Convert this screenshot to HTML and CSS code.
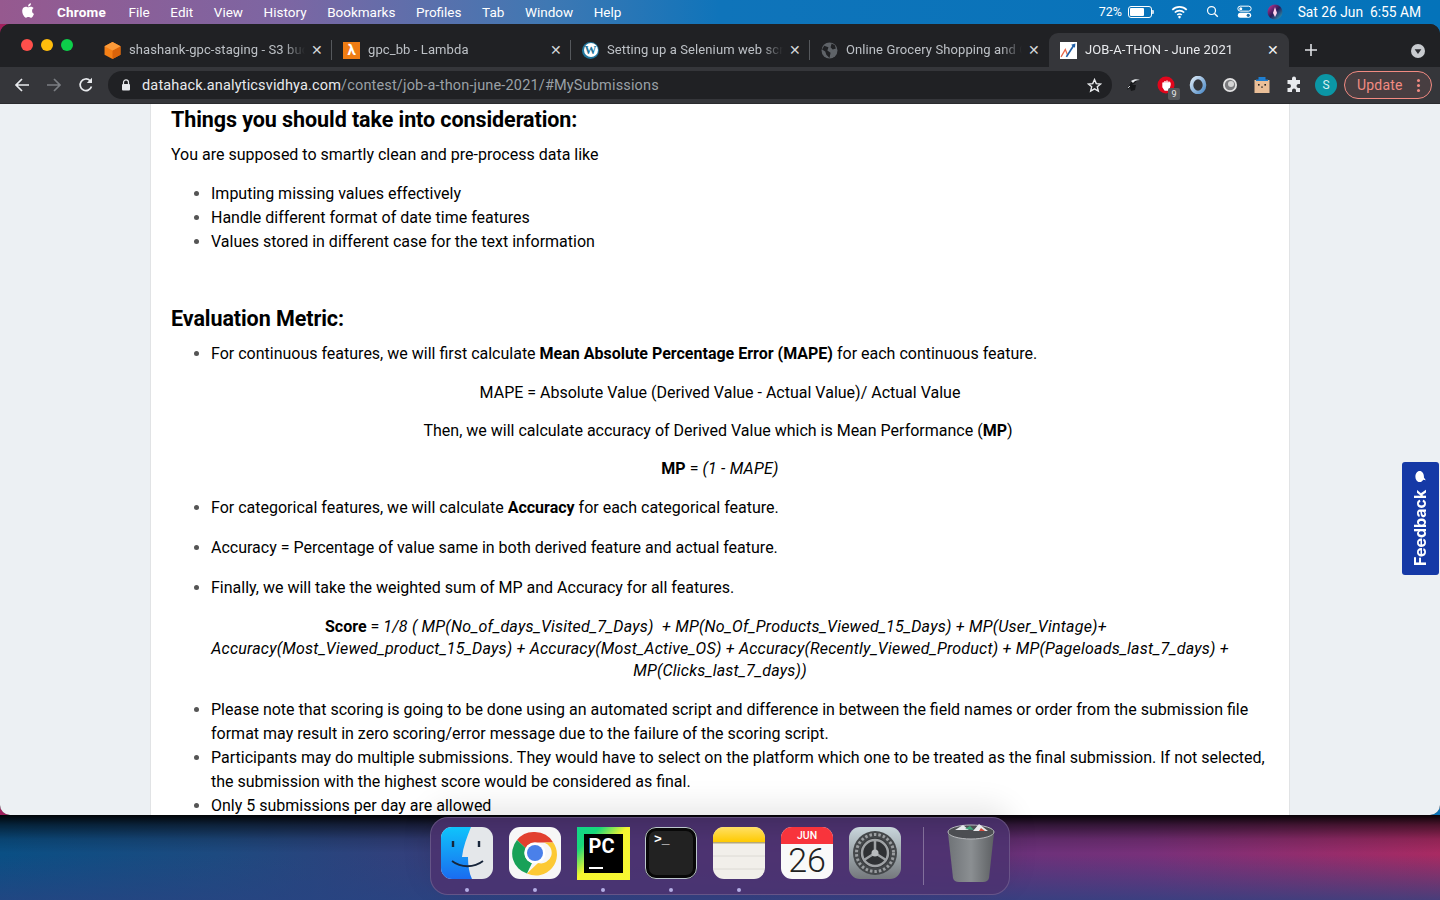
FILE: index.html
```
<!DOCTYPE html>
<html lang="en">
<head>
<meta charset="utf-8">
<title>JOB-A-THON - June 2021</title>
<link rel="stylesheet" href="styles.css">
</head>
<body>
<div class="desktop">
  <header class="menubar">
    <svg class="apple" viewBox="0 0 24 24"><path d="M17.05 12.54c-.03-2.6 2.12-3.85 2.22-3.91-1.21-1.77-3.09-2.01-3.76-2.04-1.6-.16-3.12.94-3.93.94-.81 0-2.06-.92-3.39-.89-1.74.03-3.35 1.01-4.25 2.57-1.81 3.14-.46 7.8 1.3 10.35.86 1.25 1.89 2.65 3.24 2.6 1.3-.05 1.79-.84 3.36-.84 1.57 0 2.01.84 3.39.81 1.4-.02 2.28-1.27 3.14-2.53.99-1.45 1.4-2.85 1.42-2.93-.03-.01-2.72-1.04-2.75-4.13zM14.47 4.9c.72-.87 1.2-2.08 1.07-3.28-1.03.04-2.28.69-3.02 1.55-.66.77-1.24 2-1.09 3.18 1.15.09 2.33-.58 3.04-1.45z"/></svg>
    <nav class="menus">
      <span class="menu-app">Chrome</span><span>File</span><span>Edit</span><span>View</span><span>History</span><span>Bookmarks</span><span>Profiles</span><span>Tab</span><span>Window</span><span>Help</span>
    </nav>
    <div class="status">
      <span class="pct">72%</span>
      <span class="battery"><span class="battery-fill"></span></span>
      <svg class="st-wifi" viewBox="0 0 20 16"><path d="M1.5 5.5a12 12 0 0 1 17 0M4.5 8.6a7.8 7.8 0 0 1 11 0M7.4 11.5a3.6 3.6 0 0 1 5.2 0" fill="none" stroke="#fff" stroke-width="1.9"/><circle cx="10" cy="14" r="1.5" fill="#fff"/></svg>
      <svg class="st-search" viewBox="0 0 16 16"><circle cx="6.8" cy="6.8" r="4.9" fill="none" stroke="#fff" stroke-width="1.5"/><path d="M10.4 10.4 14.5 14.5" stroke="#fff" stroke-width="1.7"/></svg>
      <svg class="st-control" viewBox="0 0 18 16"><rect x="1" y="1" width="16" height="6" rx="3" fill="none" stroke="#fff" stroke-width="1.2"/><circle cx="4.5" cy="4" r="1.8" fill="#fff"/><rect x="1" y="9" width="16" height="6" rx="3" fill="#fff"/><circle cx="13.5" cy="12" r="1.9" fill="#1a6ea8"/></svg>
      <svg class="st-siri" viewBox="0 0 16 16"><defs><linearGradient id="sg" x1="0" y1="0" x2="1" y2="1"><stop offset="0" stop-color="#d8369c"/><stop offset=".5" stop-color="#2a1c58"/><stop offset="1" stop-color="#28b0c8"/></linearGradient></defs><circle cx="8" cy="8" r="7.5" fill="url(#sg)"/><path d="M8 3 10 9 8 13 6 9z" fill="#ffd4ee"/></svg>
      <span class="clock">Sat 26 Jun&nbsp; 6:55 AM</span>
    </div>
  </header>

  <main class="window">
    <div class="tabstrip">
      <div class="traffic"><i class="dot-red"></i><i class="dot-yellow"></i><i class="dot-green"></i></div>
      <div class="tab sep">
        <svg class="fav" viewBox="0 0 16 16"><path d="M8 0 15.5 4V12L8 16 .5 12V4z" fill="#f58016"/><path d="M8 8 15.5 4V12L8 16z" fill="#d9630a"/><path d="M8 0 15.5 4 8 8 .5 4z" fill="#fb9a3a"/></svg>
        <span class="tab-title">shashank-gpc-staging - S3 bucket</span><span class="tab-x">✕</span>
      </div>
      <div class="tab sep">
        <span class="fav fav-lambda">λ</span>
        <span class="tab-title">gpc_bb - Lambda</span><span class="tab-x">✕</span>
      </div>
      <div class="tab sep">
        <span class="fav fav-wp"><span class="fav-wp-inner">W</span></span>
        <span class="tab-title">Setting up a Selenium web scraper</span><span class="tab-x">✕</span>
      </div>
      <div class="tab">
        <svg class="fav" viewBox="0 0 16 16"><circle cx="8" cy="8" r="7.5" fill="#5f6368"/><path d="M3 3.5 7 5 6 8l3 2-1 5-3-3-1-3-3-2zM10 1.5l3 1.5 1 3-3 1-2-2z" fill="#202124"/></svg>
        <span class="tab-title">Online Grocery Shopping and Online</span><span class="tab-x">✕</span>
      </div>
      <div class="tab tab-active">
        <svg class="fav" viewBox="0 0 16 16"><rect width="16" height="16" fill="#fff"/><path d="M1 14 5 7l2 5" fill="none" stroke="#e8684a" stroke-width="1.2"/><path d="M6 14 13 3" fill="none" stroke="#1f5fa8" stroke-width="1.6"/><path d="M10.5 2.5 14.5 1.5 14 5.5z" fill="#1f5fa8"/></svg>
        <span class="tab-title tab-title-active">JOB-A-THON - June 2021</span><span class="tab-x tab-x-active">✕</span>
      </div>
      <svg class="newtab" viewBox="0 0 14 14"><path d="M7 1v12M1 7h12" stroke="#dfe1e5" stroke-width="1.6"/></svg>
      <span class="tabmenu"><svg viewBox="0 0 14 14"><circle cx="7" cy="7" r="7" fill="#c8cbcf"/><path d="M3.6 5.2h6.8L7 10z" fill="#2b2c30"/></svg></span>
    </div>

    <div class="toolbar">
      <svg class="nav-ic" viewBox="0 0 16 16"><path d="M15 8H2M8 2 2 8l6 6" fill="none" stroke="#e8eaed" stroke-width="1.7"/></svg>
      <svg class="nav-ic" viewBox="0 0 16 16"><path d="M1 8h13M8 2l6 6-6 6" fill="none" stroke="#7b7e83" stroke-width="1.7"/></svg>
      <svg class="nav-ic" viewBox="0 0 16 16"><path d="M13.5 9.5A5.8 5.8 0 1 1 12 3.6" fill="none" stroke="#e8eaed" stroke-width="1.7"/><path d="M14 .8V6H8.8z" fill="#e8eaed"/></svg>
      <div class="omnibox">
        <svg class="lock" viewBox="0 0 10 12"><path d="M2.5 5V3.4a2.5 2.5 0 0 1 5 0V5" fill="none" stroke="#e8eaed" stroke-width="1.2"/><rect x="1" y="5" width="8" height="6.5" rx="1" fill="#e8eaed"/></svg>
        <span class="url"><span class="url-host">datahack.analyticsvidhya.com</span>/contest/job-a-thon-june-2021/#MySubmissions</span>
        <svg class="star" viewBox="0 0 16 16"><path d="M8 1.7 9.900 6l4.600.4-3.500 3 1.100 4.600L8 11.600 3.900 14 5 9.400l-3.500-3L6.100 6z" fill="none" stroke="#e8eaed" stroke-width="1.500"/></svg>
      </div>
      <div class="ext-row">
        <svg class="ext" viewBox="0 0 18 18"><path d="M2 14 6 6c2-3 6-3 10-2-3 0-5 1-6 3l-3 2 4 0-1 5-4 1-1-3z" fill="#17181a"/><path d="M6 5c3-2 6-2 9-1-3 0-6 1-7 3z" fill="#e8eaed"/><path d="M3 12l2-2" stroke="#c8cbcf"/></svg>
        <span class="ext ext-stop"><svg viewBox="0 0 18 18"><circle cx="9" cy="9" r="8.500" fill="#e1061c"/><path d="M6 6.500v4.500l2 3h3.500l1.500-5V6.500M8 5v4M10 4.500V9M12 5.500V9" fill="#fff" stroke="#fff" stroke-width="1.400"/></svg><b class="ext-badge">9</b></span>
        <svg class="ext" viewBox="0 0 18 18"><defs><linearGradient id="rg" x1="0" y1="0" x2="1" y2="1"><stop offset="0" stop-color="#dbe8f4"/><stop offset="1" stop-color="#4f8cc8"/></linearGradient></defs><ellipse cx="9" cy="9" rx="6.500" ry="7.500" fill="none" stroke="url(#rg)" stroke-width="3.600"/></svg>
        <svg class="ext" viewBox="0 0 18 18"><circle cx="9" cy="9" r="7" fill="#e3e3e3"/><circle cx="9" cy="9" r="5.200" fill="#7a7b7e"/><circle cx="10" cy="8" r="3" fill="#d4d4d4"/></svg>
        <svg class="ext" viewBox="0 0 18 18"><rect x="1.500" y="4" width="15" height="13" fill="#eabf98"/><rect x="5.500" y="1" width="7" height="3" fill="#1f7fd0"/><rect x="3" y="3.500" width="12" height="1.500" fill="#1f7fd0"/><rect x="5" y="8" width="1.600" height="1.600" fill="#222"/><rect x="11.400" y="8" width="1.600" height="1.600" fill="#222"/><rect x="8.200" y="10.500" width="1.600" height="1.200" fill="#222"/></svg>
        <svg class="ext" viewBox="0 0 18 18"><path d="M7 2.500a2 2 0 0 1 4 0V4h4v4h-1.500a2 2 0 0 0 0 4H15v4h-4v-1.500a2 2 0 0 0-4 0V16H2.500v-4H4a2 2 0 0 0 0-4H2.500V4H7z" fill="#e8eaed"/></svg>
        <span class="avatar">S</span>
      </div>
      <div class="update"><span class="update-text">Update</span><span class="update-dots"><i></i><i></i><i></i></span></div>
    </div>

    <div class="page">
      <article class="card">
        <h3>Things you should take into consideration:</h3>
        <p>You are supposed to smartly clean and pre-process data like</p>
        <ul>
          <li>Imputing missing values effectively</li>
          <li>Handle different format of date time features</li>
          <li>Values stored in different case for the text information</li>
        </ul>
        <p class="spacer">&nbsp;</p>
        <h3>Evaluation Metric:</h3>
        <ul>
          <li>For continuous features, we will first calculate <strong>Mean Absolute Percentage Error (MAPE)</strong> for each continuous feature.</li>
        </ul>
        <p class="center">MAPE = Absolute Value (Derived Value - Actual Value)/ Actual Value</p>
        <p class="center">Then, we will calculate accuracy of Derived Value which is Mean Performance (<strong>MP</strong>)&nbsp;</p>
        <p class="center"><strong>MP</strong> = <em>(1 - MAPE)</em></p>
        <ul><li>For categorical features, we will calculate <strong>Accuracy</strong> for each categorical feature.</li></ul>
        <ul><li>Accuracy = Percentage of value same in both derived feature and actual feature.</li></ul>
        <ul><li>Finally, we will take the weighted sum of MP and Accuracy for all features.</li></ul>
        <p class="center"><strong>Score</strong> = <em>1/8 ( MP(No_of_days_Visited_7_Days)&nbsp; + MP(No_Of_Products_Viewed_15_Days) + MP(User_Vintage)+&nbsp;&nbsp;<br>Accuracy(Most_Viewed_product_15_Days) + Accuracy(Most_Active_OS) + Accuracy(Recently_Viewed_Product) + MP(Pageloads_last_7_days) + MP(Clicks_last_7_days))</em></p>
        <ul>
          <li>Please note that scoring is going to be done using an automated script and difference in between the field names or order from the submission file format may result in zero scoring/error message due to the failure of the scoring script.</li>
          <li>Participants may do multiple submissions. They would have to select on the platform which one to be treated as the final submission. If not selected, the submission with the highest score would be considered as final.</li>
          <li>Only 5 submissions per day are allowed</li>
        </ul>
      </article>
      <aside class="feedback"><span class="feedback-text">Feedback</span><svg class="feedback-ic" viewBox="0 0 14 14"><path d="M7 1.500c3.300 0 6 1.900 6 4.600s-2.700 4.600-6 4.600l-1 0-3 2 .6-2.800C2 9 1 7.700 1 6.100 1 3.400 3.700 1.500 7 1.500z" fill="#fff"/></svg></aside>
    </div>
  </main>

  <footer class="dock-area">
    <div class="dock">
      <div class="dock-item">
        <svg class="dock-ic" viewBox="0 0 52 52"><defs><linearGradient id="fa" x1="0" y1="0" x2="0" y2="1"><stop offset="0" stop-color="#0fc4fb"/><stop offset="1" stop-color="#1a6cf0"/></linearGradient></defs><rect width="52" height="52" rx="11" fill="#e4e7ea"/><path d="M11 0H30C26 10 22 20 21 30H27C27 38 28 46 31 52H11A11 11 0 0 1 0 41V11A11 11 0 0 1 11 0Z" fill="url(#fa)"/><path d="M12 14v6M38 14v6" stroke="#17253a" stroke-width="2.400"/><path d="M11 34c9 7 22 7 31 0" fill="none" stroke="#17253a" stroke-width="1.800"/></svg>
        <i class="dock-dot"></i>
      </div>
      <div class="dock-item">
        <svg class="dock-ic" viewBox="0 0 52 52"><rect width="52" height="52" rx="11" fill="#f7f7f7"/><path d="M26 5A21 21 0 0 1 44.200 15.500H26A10.500 10.500 0 0 0 16.600 21L8 13A21 21 0 0 1 26 5Z" fill="#e2402f"/><path d="M8 13 16.600 21 A10.500 10.500 0 0 0 23 36L18 46.500 A21 21 0 0 1 8 13Z" fill="#18a158"/><path d="M44.200 15.500A21 21 0 0 1 18 46.500L29 36A10.500 10.500 0 0 0 35 15.500Z" fill="#fcc934"/><circle cx="26" cy="26" r="10.500" fill="#fff"/><circle cx="26" cy="26" r="8" fill="#4a80ea"/></svg>
        <i class="dock-dot"></i>
      </div>
      <div class="dock-item">
        <div class="dock-pc"><div class="dock-pc-inner"><span class="dock-pc-text">PC</span><i class="dock-pc-bar"></i></div></div>
        <i class="dock-dot"></i>
      </div>
      <div class="dock-item">
        <div class="dock-term"><span class="dock-term-text">&gt;_</span></div>
        <i class="dock-dot"></i>
      </div>
      <div class="dock-item">
        <svg class="dock-ic" viewBox="0 0 52 52"><defs><linearGradient id="ny" x1="0" y1="0" x2="0" y2="1"><stop offset="0" stop-color="#ffe066"/><stop offset="1" stop-color="#ffca00"/></linearGradient><clipPath id="nc"><rect width="52" height="52" rx="11"/></clipPath></defs><g clip-path="url(#nc)"><rect width="52" height="52" fill="#f1efea"/><rect width="52" height="15" fill="url(#ny)"/><rect y="15" width="52" height="1.500" fill="#b5a878"/><path d="M0 29h52M0 42h52" stroke="#dcdad4"/></g></svg>
        <i class="dock-dot"></i>
      </div>
      <div class="dock-item">
        <div class="dock-cal"><span class="dock-cal-month">JUN</span><span class="dock-cal-day">26</span></div>
      </div>
      <div class="dock-item">
        <svg class="dock-ic" viewBox="0 0 52 52"><defs><linearGradient id="gr" x1="0" y1="0" x2="0" y2="1"><stop offset="0" stop-color="#c9d6dc"/><stop offset="1" stop-color="#74787c"/></linearGradient></defs><rect width="52" height="52" rx="11" fill="url(#gr)"/><circle cx="26" cy="26" r="22" fill="#44474a"/><circle cx="26" cy="26" r="18.500" fill="none" stroke="#9a9da0" stroke-width="3" stroke-dasharray="2.500 2"/><circle cx="26" cy="26" r="15" fill="#2f3134"/><circle cx="26" cy="26" r="13" fill="none" stroke="#9fa2a5" stroke-width="2.500"/><path d="M26 26V13M26 26 15 33M26 26 37 33" stroke="#9fa2a5" stroke-width="2.500"/><circle cx="26" cy="26" r="3.500" fill="#b9bcbe"/></svg>
      </div>
      <i class="dock-divider"></i>
      <div class="dock-item">
        <svg class="dock-ic dock-trash" viewBox="0 0 52 60"><defs><linearGradient id="tr" x1="0" y1="0" x2="1" y2="0"><stop offset="0" stop-color="#6f7377"/><stop offset=".5" stop-color="#8b8f92"/><stop offset="1" stop-color="#5d6063"/></linearGradient></defs><path d="M3 10H49L44 55Q43 59 38 59H14Q9 59 8 55Z" fill="url(#tr)"/><ellipse cx="26" cy="9" rx="23" ry="7" fill="#4c4e52" stroke="#b8babd"/><path d="M10 7l8-5 6 5zM28 8l6-7 9 7z" fill="#e8eaed"/><path d="M20 6l5-3 4 4z" fill="#3ea57a"/><path d="M36 5l4 3h-6z" fill="#d24a3a"/></svg>
      </div>
    </div>
  </footer>
</div>
</body>
</html>
```
FILE: styles.css
```
* { box-sizing: border-box; }
html, body { margin: 0; padding: 0; height: 100%; }
body {
  font-family: Roboto, "Liberation Sans", sans-serif;
  background: linear-gradient(90deg, #a0205c, #0a72b8);
  overflow: hidden;
}
.desktop { width: 1440px; height: 900px; display: flex; flex-direction: column; overflow: hidden; }

/* menu bar */
.menubar {
  height: 24px; flex: none; display: flex; align-items: center; color: #fff; font-size: 13.500px; padding-left: 20px;
  background: linear-gradient(90deg, #96598f 0, #7c66a3 20%, #3f78b3 38%, #0f74ba 50%, #0473ba 100%);
}
.apple { width: 17px; height: 17px; fill: #fff; flex: none; margin-top: -3px; }
.menus { display: flex; gap: 20.600px; margin-left: 20px; margin-top: -1px; }
.menu-app { font-weight: 700; margin-right: 2px; letter-spacing: .2px; }
.status { margin-left: auto; display: flex; align-items: center; padding-right: 19px; margin-top: -1px; }
.pct { font-size: 12.500px; width: 29px; }
.battery { width: 24px; height: 12px; border: 1px solid #fff; border-radius: 3px; padding: 1px; display: block; margin-right: 19px; position: relative; }
.battery::after { content: ""; position: absolute; right: -3px; top: 3px; width: 2px; height: 4px; background: #c8dcec; border-radius: 0 1px 1px 0; }
.battery-fill { display: block; width: 72%; height: 100%; background: #fff; border-radius: 1px; }
.st-wifi { width: 17px; height: 14px; margin-right: 18px; }
.st-search { width: 13px; height: 13px; margin-right: 18px; }
.st-control { width: 15px; height: 14px; margin-right: 15px; }
.st-siri { width: 16px; height: 16px; margin-right: 15px; }
.clock { font-size: 13.800px; }

/* window */
.window {
  height: 791px; flex: none; display: flex; flex-direction: column; background: #202124;
  border-radius: 10px; overflow: hidden; position: relative; z-index: 1;
}
.tabstrip { height: 43px; flex: none; display: flex; align-items: flex-end; background: #202124; position: relative; }
.traffic { width: 93px; height: 100%; flex: none; display: flex; gap: 8px; padding: 15px 0 0 21px; }
.traffic i { display: block; width: 12px; height: 12px; border-radius: 50%; }
.dot-red { background: #ff4f4b; }
.dot-yellow { background: #ffbd0c; }
.dot-green { background: #0dd04a; }
.tab { width: 239px; height: 34px; flex: none; display: flex; align-items: center; padding-left: 11px; position: relative; color: #bdc1c6; font-size: 13px; }
.sep::after { content: ""; position: absolute; right: 0; top: 7px; height: 20px; width: 1px; background: #55585c; }
.fav { width: 17px; height: 17px; flex: none; display: block; }
.fav-lambda { background: #ef7d14; color: #fff; font-weight: 700; font-size: 15px; line-height: 17px; text-align: center; }
.fav-wp { background: #21759b; border-radius: 50%; display: flex; align-items: center; justify-content: center; }
.fav-wp-inner { width: 14px; height: 14px; border-radius: 50%; background: #fff; color: #21759b; font: 700 12px/14px "Liberation Serif", serif; text-align: center; }
.tab-title {
  width: 176px; flex: none; margin: 0 0 2px 8px; white-space: nowrap; overflow: hidden; letter-spacing: .1px;
  -webkit-mask-image: linear-gradient(90deg, #000 88%, transparent 100%); mask-image: linear-gradient(90deg, #000 88%, transparent 100%);
}
.tab-x { margin-left: 5px; width: 14px; flex: none; text-align: center; font-size: 13.500px; color: #d4d6d9; }
.tab-active { background: #35363a; border-radius: 9px 9px 0 0; color: #e8eaed; width: 240px; }
.tab-x-active { color: #f1f3f4; }
.newtab { width: 14px; height: 14px; margin: 0 0 10px 15px; flex: none; }
.tabmenu { width: 14px; height: 14px; margin: 0 15px 10px auto; display: block; }
.toolbar { height: 36px; flex: none; display: flex; align-items: center; background: #35363a; padding-left: 14px; position: relative; }
.nav-ic { width: 16px; height: 16px; margin-right: 16px; flex: none; }
.nav-ic:nth-of-type(3) { margin-right: 14px; }
.omnibox { width: 1004px; height: 28px; flex: none; border-radius: 14px; background: #202124; display: flex; align-items: center; padding-left: 13px; }
.lock { width: 10px; height: 12px; flex: none; }
.url { margin-left: 11px; color: #9aa0a6; font-size: 14.500px; letter-spacing: .16px; white-space: nowrap; }
.url-host { color: #e8eaed; }
.star { width: 15px; height: 15px; margin-left: auto; margin-right: 10px; }
.ext-row { display: flex; align-items: center; gap: 14px; margin-left: 13px; flex: none; }
.ext { width: 18px; height: 18px; flex: none; display: block; position: relative; }
.ext-stop svg { display: block; }
.ext-badge { position: absolute; right: -5px; bottom: -6px; width: 12px; height: 12px; background: #55575a; color: #e8eaed; font-size: 9px; font-weight: 400; line-height: 12px; text-align: center; border-radius: 2px; }
.avatar { width: 22px; height: 22px; border-radius: 50%; background: #0b96a5; color: #d8f0f2; font-size: 12px; line-height: 22px; text-align: center; margin-left: -2px; }
.update { width: 88px; height: 28px; margin-left: 7px; flex: none; border: 1px solid #f28b82; border-radius: 14px; background: rgba(242, 139, 130, .1); display: flex; align-items: center; padding-left: 12px; color: #f28b82; font-size: 14px; letter-spacing: .2px; }
.update-dots { display: flex; flex-direction: column; gap: 2px; margin-left: auto; margin-right: 11px; }
.update-dots i { display: block; width: 3px; height: 3px; border-radius: 50%; background: #f28b82; }

/* page */
.page { flex: 1; min-height: 0; background: #ecf0f3; overflow: hidden; position: relative; border-top: 1px solid #2a2b2e; }
.card {
  width: 1140px; margin-left: 150px; height: 100%; background: #fff; overflow: hidden; padding: 4px 20px 0 20px;
  border-left: 1px solid #e1e3e5; border-right: 1px solid #e1e3e5; color: #000; font-size: 16px; line-height: 22px;
}
.card h3 { font-size: 21.500px; line-height: 24px; font-weight: 700; margin: 0 0 11px; letter-spacing: -.08px; }
.card p { margin: 16px 0; }
.card h3 + p { margin-top: 12px; }
.card ul { margin: 16px 0; padding-left: 40px; }
.card h3 + ul { margin-top: 0; }
.card .spacer { margin-bottom: 15px; }
.card li { line-height: 24px; }
.card li::marker { color: #555; }
.card em { letter-spacing: .22px; }
.center { text-align: center; }
.feedback {
  position: absolute; right: 1px; top: 358px; width: 37px; height: 113px; background: #1539a6; border-radius: 3px;
  display: flex; justify-content: center; align-items: center; padding-top: 1px; gap: 7px; color: #fff; writing-mode: vertical-rl;
  transform: rotate(180deg);
}
.feedback-text { font: 700 16px/37px Inter, Roboto, sans-serif; }
.feedback-ic { width: 13px; height: 13px; transform: rotate(90deg); }

/* dock */
.dock-area {
  flex: 1; min-height: 0; display: flex; justify-content: center; padding-top: 2px; position: relative; z-index: 2;
  background:
    linear-gradient(180deg, rgba(0,0,0,.95) 0, rgba(0,0,0,.55) 10px, rgba(0,0,0,.15) 24px, transparent 38px),
    linear-gradient(0deg, rgba(40,68,130,.75) 0, transparent 45px),
    linear-gradient(90deg, #0a4f84 0, #1d4a80 15%, #3a3c7a 33%, #5c337a 60%, #78307a 80%, #a82a62 100%);
}
.dock {
  width: 580px; height: 78px; flex: none; display: flex; gap: 16px; padding: 9px 0 0 10px;
  background: rgba(76, 50, 112, .85); border: 1px solid rgba(255,255,255,.16); border-radius: 18px;
  box-shadow: 0 -10px 30px rgba(0,0,0,.1);
}
.dock-item { width: 52px; flex: none; display: flex; flex-direction: column; align-items: center; }
.dock-ic { width: 52px; height: 52px; display: block; flex: none; }
.dock-trash { height: 60px; margin-top: -4px; }
.dock-dot { width: 4px; height: 4px; border-radius: 50%; background: #b4aee6; margin-top: 9px; display: block; }
.dock-pc {
  width: 53px; height: 53px; padding: 7px; flex: none;
  background: linear-gradient(135deg, #12d68a 0, #18d87a 22%, #f5f530 48%, #f7f732 100%);
}
.dock-pc-inner { height: 100%; background: #000; padding: 0 0 0 5px; color: #fff; position: relative; }
.dock-pc-text { font: 700 20px/24px Roboto, sans-serif; display: block; }
.dock-pc-bar { position: absolute; left: 5px; bottom: 4px; width: 14px; height: 2px; background: #fff; display: block; }
.dock-item:nth-child(3) .dock-dot { margin-top: 8px; }
.dock-term { width: 52px; height: 52px; flex: none; background: #222; border: 4px solid #080808; outline: 1px solid #bcc6cc; outline-offset: -1px; border-radius: 11px; color: #fff; padding: 1px 0 0 5px; }
.dock-term-text { font: 700 13px/16px "Liberation Mono", monospace; display: block; }
.dock-cal { width: 52px; height: 52px; flex: none; background: #f9f9f9; border-radius: 11px; overflow: hidden; display: flex; flex-direction: column; align-items: center; }
.dock-cal-month { width: 100%; height: 17px; background: #f8343c; color: #fff; font-size: 10.500px; font-weight: 500; line-height: 18px; text-align: center; flex: none; }
.dock-cal-day { color: #222; font-size: 34px; font-weight: 300; line-height: 32px; }
.dock-divider { width: 1px; height: 58px; background: rgba(255,255,255,.3); display: block; flex: none; margin: 0 5px 0 6px; }
```
